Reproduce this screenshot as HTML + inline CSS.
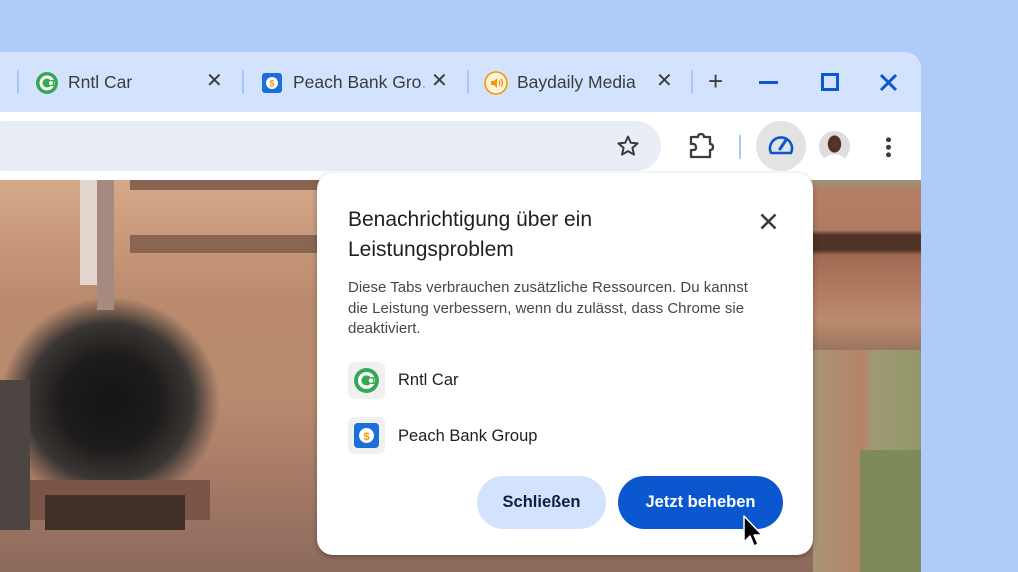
<!DOCTYPE html>
<html><head><meta charset="utf-8"><style>
*{margin:0;padding:0;box-sizing:border-box}
body{width:1018px;height:572px;background:#aecbfa;position:relative;overflow:hidden;font-family:"Liberation Sans",sans-serif}
.win{position:absolute;left:0;top:52px;width:921px;height:520px;background:#d3e3fd;border-top-right-radius:16px;overflow:hidden}
.tb{position:absolute;left:0;top:60px;width:921px;height:68px;background:#fff}
.omni{position:absolute;left:-20px;top:9px;width:681px;height:50px;background:#e9eef6;border-radius:25px}
.content{position:absolute;left:0;top:128px;width:921px;height:392px;
background:
radial-gradient(ellipse 110px 105px at 110px 222px,#151413 0%,#1e1c1b 45%,#3a3634 75%,rgba(80,65,60,0) 100%),
linear-gradient(180deg,#d4a889 0,#c8997a 60px,#b98a6d 120px,#b88a6e 220px,#a67a66 300px,#8c6a5c 392px)}
.cell{position:absolute}
.sep{position:absolute;width:2px;height:24px;background:#a8c7fa;top:18px;border-radius:1px}
.tab{position:absolute;top:20px;font-size:17.5px;color:#3c3c3c}
.x{position:absolute;top:16px;font-size:20px;color:#3c3c3c}
.dlg{position:absolute;left:317px;top:173px;width:496px;height:382px;background:#fff;border-radius:16px;box-shadow:0 2px 6px rgba(0,0,0,.3)}
.t{position:absolute;left:31px;top:32px;font-size:21px;line-height:30px;color:#1f1f1f;font-weight:500}
.b{position:absolute;left:31px;top:105px;width:440px;font-size:15px;line-height:20.5px;color:#474747;white-space:nowrap}
.ic{position:absolute;left:31px;width:37px;height:37px;background:#f0f0f0;border-radius:6px}
.it{position:absolute;left:81px;font-size:16.5px;color:#1f1f1f}
.btn{position:absolute;top:303px;height:53px;border-radius:27px;font-size:16.5px;font-weight:bold;text-align:center;line-height:53px}
</style></head><body>
<div class="win">
 <div class="sep" style="left:17px"></div>
 <svg style="position:absolute;left:36px;top:20px" width="22" height="22" viewBox="0 0 22 22"><circle cx="11" cy="11" r="11" fill="#34a853"/><circle cx="11" cy="11" r="6" fill="none" stroke="#fff" stroke-width="3"/><rect x="13" y="8" width="5" height="6" fill="#34a853"/><circle cx="15" cy="11" r="2" fill="#fff"/></svg>
 <div class="tab" style="left:68px">Rntl Car</div>
 <div class="x" style="left:206px">✕</div>
 <div class="sep" style="left:242px"></div>
 <svg style="position:absolute;left:262px;top:21px" width="20" height="20" viewBox="0 0 20 20"><rect width="20" height="20" rx="3" fill="#1a6fd8"/><circle cx="10" cy="10" r="6" fill="#fff"/><text x="10" y="13.5" font-size="9" text-anchor="middle" fill="#f29900" font-family="Liberation Sans" font-weight="bold">$</text></svg>
 <div class="tab" style="left:293px">Peach Bank Gro<span style="color:#aaa">.</span></div>
 <div class="x" style="left:431px">✕</div>
 <div class="sep" style="left:467px"></div>
 <svg style="position:absolute;left:484px;top:19px" width="24" height="24" viewBox="0 0 24 24"><circle cx="12" cy="12" r="11" fill="#fff3e0" stroke="#f29900" stroke-width="1.6"/><path d="M7 10h3l3-3v10l-3-3H7z" fill="#f29900"/><path d="M15 9.5q1.5 2.5 0 5M17 8q3 4 0 8" stroke="#f29900" stroke-width="1.3" fill="none"/></svg>
 <div class="tab" style="left:517px">Baydaily Media</div>
 <div class="x" style="left:656px">✕</div>
 <div class="sep" style="left:691px"></div>
 <div style="position:absolute;left:708px;top:14px;font-size:26px;color:#3c3c3c">+</div>
 <div style="position:absolute;left:759px;top:29px;width:19px;height:3px;background:#0b57d0"></div>
 <div style="position:absolute;left:821px;top:21px;width:18px;height:18px;border:3px solid #0b57d0"></div>
 <svg style="position:absolute;left:879px;top:21px" width="19" height="19"><path d="M2 2L17 17M17 2L2 17" stroke="#0b57d0" stroke-width="3"/></svg>
 <div class="tb">
  <div class="omni"></div>
  <svg style="position:absolute;left:616px;top:22px" width="24" height="24" viewBox="0 0 24 24"><path d="M12 2.5l2.8 6.3 6.8.6-5.2 4.5 1.6 6.7L12 17.1l-6 3.5 1.6-6.7-5.2-4.5 6.8-.6z" fill="none" stroke="#3c3c3c" stroke-width="2" stroke-linejoin="round"/></svg>
  <svg style="position:absolute;left:688px;top:20px" width="28" height="28" viewBox="0 0 28 28"><path d="M3 5h7q0-3 3-3t3 3h6v7q3 0 3 3t-3 3v7H3v-7h3q2 0 2-2.5T6 12H3z" fill="none" stroke="#3c3c3c" stroke-width="2.3" stroke-linejoin="round"/></svg>
  <div style="position:absolute;left:739px;top:23px;width:2px;height:24px;background:#a8c7fa"></div>
  <div style="position:absolute;left:756px;top:9px;width:50px;height:50px;border-radius:50%;background:#e3e3e3"></div>
  <svg style="position:absolute;left:767px;top:21px" width="28" height="24" viewBox="0 0 28 24"><path d="M4 20A11 11 0 1 1 24 20Z" fill="none" stroke="#0b57d0" stroke-width="2.6" stroke-linejoin="round"/><path d="M13 16L19 7" stroke="#0b57d0" stroke-width="3" stroke-linecap="round"/></svg>
  <div style="position:absolute;left:819px;top:19px;width:31px;height:31px;border-radius:50%;background:radial-gradient(ellipse 7px 9px at 50% 42%,#5a3a2a 0,#4a2e20 90%,transparent 100%),radial-gradient(ellipse 12px 8px at 50% 100%,#fff 0,#fff 90%,transparent 100%),#ddd"></div>
  <div style="position:absolute;left:886px;top:24px;width:5px;height:22px;background:radial-gradient(circle,#3c3c3c 2.3px,transparent 2.6px) 0 0/5px 7.5px"></div>
 </div>
 <div class="content">
  <div class="cell" style="left:80px;top:0;width:17px;height:105px;background:#e2d6cd"></div>
  <div class="cell" style="left:97px;top:0;width:17px;height:130px;background:#a48a7f"></div>
  <div class="cell" style="left:130px;top:55px;width:190px;height:18px;background:#8a6552"></div>
  <div class="cell" style="left:130px;top:0;width:190px;height:10px;background:#8a6452"></div>
  <div class="cell" style="left:0;top:200px;width:30px;height:150px;background:#4d4542"></div>
  <div class="cell" style="left:30px;top:300px;width:180px;height:40px;background:#7a5547"></div>
  <div class="cell" style="left:45px;top:315px;width:140px;height:35px;background:#40302a"></div>
  <div class="cell" style="left:813px;top:0;width:108px;height:170px;background:linear-gradient(180deg,#9a9478 0,#b57e62 12px,#b07a62 50px,#503226 55px,#503226 70px,#a06a52 75px,#bd8a6c 140px,#9a7560 170px)"></div>
  <div class="cell" style="left:813px;top:170px;width:108px;height:222px;background:linear-gradient(90deg,#a89576 0,#b58468 50px,#9f9a72 60px,#93986a 108px)"></div>
  <div class="cell" style="left:860px;top:270px;width:61px;height:122px;background:#7e8a5a"></div>
 </div>
</div>
<div class="dlg">
 <div class="t">Benachrichtigung über ein<br>Leistungsproblem</div>
 <svg style="position:absolute;left:443px;top:40px" width="17" height="17"><path d="M1.5 1.5L15.5 15.5M15.5 1.5L1.5 15.5" stroke="#3c3c3c" stroke-width="2.6"/></svg>
 <div class="b">Diese Tabs verbrauchen zusätzliche Ressourcen. Du kannst<br>die Leistung verbessern, wenn du zulässt, dass Chrome sie<br>deaktiviert.</div>
 <div class="ic" style="top:189px"><svg style="position:absolute;left:6px;top:6px" width="25" height="25" viewBox="0 0 22 22"><circle cx="11" cy="11" r="11" fill="#34a853"/><circle cx="11" cy="11" r="6" fill="none" stroke="#fff" stroke-width="3"/><rect x="13" y="8" width="5" height="6" fill="#34a853"/><circle cx="15" cy="11" r="2" fill="#fff"/></svg></div>
 <div class="it" style="top:198px">Rntl Car</div>
 <div class="ic" style="top:244px"><svg style="position:absolute;left:6px;top:6px" width="25" height="25" viewBox="0 0 20 20"><rect width="20" height="20" rx="3" fill="#1a6fd8"/><circle cx="10" cy="10" r="6" fill="#fff"/><text x="10" y="13.5" font-size="9" text-anchor="middle" fill="#f29900" font-family="Liberation Sans" font-weight="bold">$</text></svg></div>
 <div class="it" style="top:254px">Peach Bank Group</div>
 <div class="btn" style="left:160px;width:129px;background:#d3e3fd;color:#0a1f44">Schließen</div>
 <div class="btn" style="left:301px;width:165px;background:#0b57d0;color:#fff">Jetzt beheben</div>
</div>
<svg style="position:absolute;left:742px;top:514px" width="22" height="36" viewBox="0 0 22 36"><path d="M2 2V28L8 22L12 32L16 30L12 21H20Z" fill="#000" stroke="#fff" stroke-width="1.5" stroke-linejoin="round"/></svg>
</body></html>
